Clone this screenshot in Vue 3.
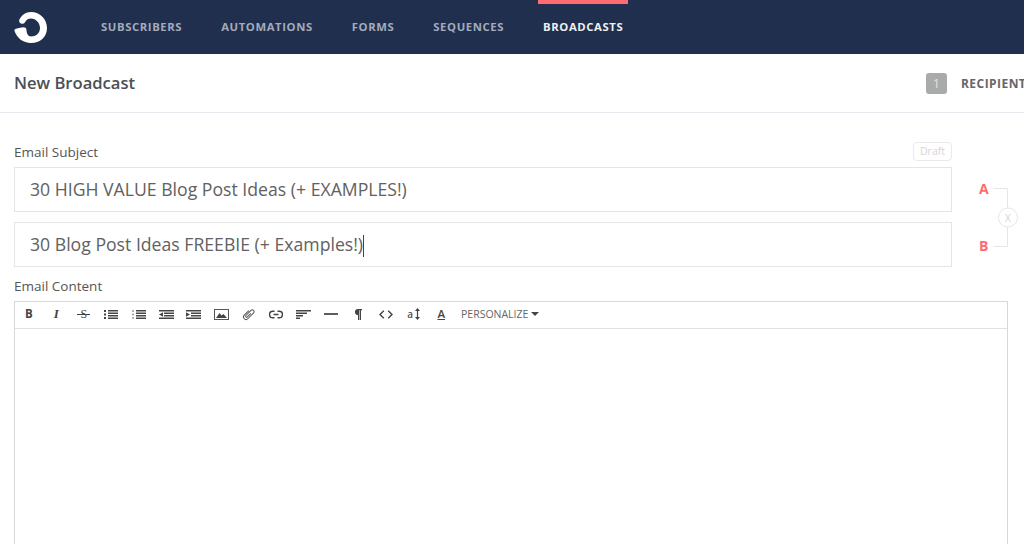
<script setup>
const navItems = [
  { label: 'SUBSCRIBERS' },
  { label: 'AUTOMATIONS' },
  { label: 'FORMS' },
  { label: 'SEQUENCES' },
  { label: 'BROADCASTS', active: true },
]
</script>

<template>
  <div class="page">
    <header class="topbar">
      <svg class="logo" width="36" height="34" viewBox="13 11 36 34" aria-label="Logo">
        <path fill="#fff" d="M14.500 31 C17 38 23 43 31 43 C40 43 47 37 47 28 C47 19 40 12 31 12 C25.500 12 21.500 15 19.200 20 C18.500 24.500 24 25 25.500 21.500 C26.500 19.800 28.500 18.500 31 18.500 C36 18.500 40 23 40 28 C40 33 36 36.500 31 36.500 C28 36.500 26.500 33 26.500 30 C26.500 26.800 23 26.800 20 27.800 C17.500 28.600 14 28.500 14.500 31 Z" />
      </svg>
      <nav class="nav">
        <a v-for="item in navItems" :key="item.label" class="nav-item" :class="{ active: item.active }">{{ item.label }}</a>
      </nav>
    </header>

    <section class="subhead">
      <h1 class="title">New Broadcast</h1>
      <div class="step">
        <span class="step-num">1</span>
        <span class="step-label">RECIPIENTS</span>
      </div>
    </section>

    <main class="content">
      <div class="subject-row">
        <div class="subject-fields">
          <div class="label-row">
            <label class="label subject-label">Email Subject</label>
            <span class="draft">Draft</span>
          </div>
          <div class="field">30 HIGH VALUE Blog Post Ideas (+ EXAMPLES!)</div>
          <div class="field second">30 Blog Post Ideas FREEBIE (+ Examples!)<span class="caret"></span></div>
        </div>
        <div class="ab">
          <span class="ab-letter a">A</span>
          <span class="ab-letter b">B</span>
          <svg class="ab-lines" width="56" height="72" viewBox="0 0 56 72">
            <path d="M0.500 0.500 H14.500 V20 M14.500 39 V58.500 H0.500" fill="none" stroke="#e3e6ea" stroke-width="1" />
            <circle cx="15" cy="29.500" r="9.500" fill="#fff" stroke="#e3e6ea" stroke-width="1" />
          </svg>
          <span class="ab-x">X</span>
        </div>
      </div>

      <label class="label content-label">Email Content</label>
      <div class="editor">
        <div class="toolbar">
          <span class="tool t-b">B</span>
          <span class="tool t-i">I</span>
          <span class="tool"><span class="t-s">S</span></span>
          <span class="tool">
            <svg width="14" height="9" viewBox="0 0 14 9"><path d="M4 .8h10M4 3.200h10M4 5.700h10M4 8.200h10" stroke="#444" stroke-width="1.400"/><path d="M0 1h2M0 4.500h2M0 8h2" stroke="#444" stroke-width="1.800"/></svg>
          </span>
          <span class="tool">
            <svg width="14" height="9" viewBox="0 0 14 9"><path d="M4 .8h10M4 3.200h10M4 5.700h10M4 8.200h10" stroke="#444" stroke-width="1.400"/><path d="M0 1h2M0 4.500h2M0 8h2" stroke="#999" stroke-width="1.600"/></svg>
          </span>
          <span class="tool">
            <svg width="15" height="9" viewBox="0 0 15 9"><path d="M0 .8h15M5 3.200h10M5 5.700h10M0 8.200h15" stroke="#444" stroke-width="1.400"/><path d="M4 2.200v4.600L0 4.500z" fill="#444"/></svg>
          </span>
          <span class="tool">
            <svg width="15" height="9" viewBox="0 0 15 9"><path d="M0 .8h15M5 3.200h10M5 5.700h10M0 8.200h15" stroke="#444" stroke-width="1.400"/><path d="M0 2.200v4.600l4-2.300z" fill="#444"/></svg>
          </span>
          <span class="tool">
            <svg width="15" height="11" viewBox="0 0 15 11"><rect x=".5" y=".5" width="14" height="10" fill="#fff" stroke="#555"/><path d="M2 9l3.500-5 2 2.500 2-1.500 3.500 4z" fill="#444"/></svg>
          </span>
          <span class="tool">
            <svg width="15" height="15" viewBox="0 0 15 15"><g transform="rotate(45 7.500 7.500)"><path d="M5 4.500V11a2.500 2.500 0 0 0 5 0V2.800a1.800 1.800 0 0 0-3.600 0V10a1 1 0 0 0 2 0V5" fill="none" stroke="#555" stroke-width="1"/></g></svg>
          </span>
          <span class="tool">
            <svg width="14" height="9" viewBox="0 0 14 9"><path d="M5.500 1.200H3.800a3.300 3.300 0 000 6.600h1.700M8.500 1.200h1.700a3.300 3.300 0 010 6.600H8.500M4.500 4.500h5" fill="none" stroke="#444" stroke-width="1.500"/></svg>
          </span>
          <span class="tool">
            <svg width="15" height="9" viewBox="0 0 15 9"><path d="M0 .8h15M0 3.300h11M0 5.800h7M0 8.200h4" stroke="#444" stroke-width="1.400"/></svg>
          </span>
          <span class="tool">
            <svg width="14" height="2" viewBox="0 0 14 2"><path d="M0 1h14" stroke="#333" stroke-width="1.600"/></svg>
          </span>
          <span class="tool">
            <svg width="7" height="11" viewBox="0 0 7 11"><path d="M3 0H7V1.300H6V11H4.800V1.300H4.200V11H3V6.200A3.100 3.100 0 0 1 3 0Z" fill="#444"/></svg>
          </span>
          <span class="tool">
            <svg width="14" height="9" viewBox="0 0 14 9"><path d="M4.800 .8L1 4.500l3.800 3.700M9.200 .8L13 4.500 9.200 8.200" fill="none" stroke="#444" stroke-width="1.400"/></svg>
          </span>
          <span class="tool t-size">
            <span class="t-a">a</span>
            <svg width="5" height="12" viewBox="0 0 5 12"><path d="M2.500 2v8" stroke="#444" stroke-width="1.200"/><path d="M2.500 0L5 3H0zM2.500 12L0 9h5z" fill="#444"/></svg>
          </span>
          <span class="tool t-color">A</span>
          <span class="personalize">PERSONALIZE<i class="pcaret"></i></span>
        </div>
        <div class="editor-body"></div>
      </div>
    </main>
  </div>
</template>

<style>
html, body { margin: 0; padding: 0; background: #fff; overflow: hidden; }
</style>

<style scoped>
.page {
  width: 1024px;
  height: 544px;
  overflow: hidden;
  background: #fff;
  font-family: "Open Sans", "Noto Sans", sans-serif;
  color: #555;
}
.topbar {
  height: 54px;
  background: #212f4f;
  display: flex;
  align-items: stretch;
}
.logo { margin: 11px 0 0 13px; flex: none; }
.nav {
  display: flex;
  margin-left: 32.5px;
}
.nav-item {
  box-sizing: border-box;
  height: 54px;
  padding: 0 19.5px;
  line-height: 54px;
  font-size: 11.3px;
  font-weight: 700;
  letter-spacing: .6px;
  color: #a3acbd;
  white-space: nowrap;
}
.nav-item.active {
  color: #eef0f3;
  position: relative;
}
.nav-item.active::before {
  content: "";
  position: absolute;
  left: 14.5px;
  right: 14.5px;
  top: 0;
  height: 4px;
  background: #ff6b72;
}
.subhead {
  height: 59px;
  box-sizing: border-box;
  border-bottom: 1px solid #e6e9ed;
  display: flex;
  align-items: center;
  justify-content: space-between;
  padding-left: 14px;
  overflow: hidden;
}
.title {
  margin: 0 0 2px;
  font-size: 16.6px;
  font-weight: 600;
  color: #4a5055;
}
.step {
  display: flex;
  align-items: center;
  gap: 14px;
  width: 98px;
  flex: none;
  white-space: nowrap;
}
.step-num {
  width: 21px;
  height: 21px;
  flex: none;
  border-radius: 3px;
  background: #aaa;
  color: #e4e4e4;
  font-size: 12px;
  line-height: 21px;
  text-align: center;
}
.step-label {
  font-size: 12px;
  font-weight: 700;
  letter-spacing: .45px;
  color: #666;
}
.content { padding: 29px 0 0 14px; }
.subject-row { display: flex; }
.subject-fields { width: 938px; flex: none; }
.label-row {
  display: flex;
  justify-content: space-between;
  align-items: center;
  height: 19px;
  margin-bottom: 6px;
}
.label {
  display: block;
  font-size: 13.5px;
  line-height: 19px;
  color: #555;
}
.subject-label { margin-top: 2px; }
.draft {
  box-sizing: border-box;
  width: 39px;
  height: 19px;
  border: 1px solid #e8ebee;
  border-radius: 4px;
  font-size: 10.5px;
  line-height: 17px;
  text-align: center;
  color: #d2d6da;
}
.field {
  box-sizing: border-box;
  height: 45px;
  border: 1px solid #e3e5e8;
  padding-left: 15px;
  font-size: 17.65px;
  line-height: 43px;
  color: #616161;
  white-space: nowrap;
}
.field.second { margin-top: 10px; }
.caret {
  display: inline-block;
  width: 1px;
  height: 22px;
  background: #444;
  vertical-align: -6px;
}
.ab { position: relative; flex: 1; }
.ab-letter {
  position: absolute;
  left: 27px;
  font-size: 14px;
  line-height: 18px;
  font-weight: 700;
  color: #ff6b72;
}
.ab-letter.a { top: 38px; }
.ab-letter.b { top: 95px; }
.ab-lines { position: absolute; left: 41px; top: 46px; }
.ab-x {
  position: absolute;
  left: 51px;
  top: 69px;
  width: 10px;
  font-size: 10px;
  line-height: 14px;
  text-align: center;
  color: #d2d6da;
}
.content-label { margin-top: 10px; height: 24px; line-height: 19px; }
.editor {
  box-sizing: border-box;
  width: 994px;
  height: 300px;
  border: 1px solid #d8d8d8;
  border-bottom: none;
}
.toolbar {
  box-sizing: border-box;
  height: 27px;
  padding-bottom: 2px;
  border-bottom: 1px solid #e2e2e2;
  display: flex;
  align-items: center;
}
.tool {
  width: 27.5px;
  flex: none;
  display: flex;
  align-items: center;
  justify-content: center;
  color: #444;
  font-size: 11px;
  line-height: 14px;
}
.t-b { font-weight: 700; font-size: 11.5px; }
.t-i { font-style: italic; font-family: "Liberation Serif", serif; font-weight: 700; font-size: 13px; }
.t-s {
  position: relative;
  font-size: 12px;
  font-family: "Liberation Serif", serif;
}
.t-s::after {
  content: "";
  position: absolute;
  left: -3px;
  right: -3px;
  top: 7px;
  height: 1px;
  background: #444;
}
.t-size { gap: 2px; }
.t-a { font-size: 10px; font-weight: 600; color: #555; }
.t-color { font-size: 11.5px; font-weight: 600; text-decoration: underline; text-underline-offset: 1px; }
.personalize {
  margin-left: 6px;
  font-size: 10.5px;
  color: #666;
  display: flex;
  align-items: center;
  white-space: nowrap;
}
.pcaret {
  margin-left: 3px;
  width: 0;
  height: 0;
  border-left: 4px solid transparent;
  border-right: 4px solid transparent;
  border-top: 4px solid #444;
}
.editor-body { height: 100%; }
</style>
